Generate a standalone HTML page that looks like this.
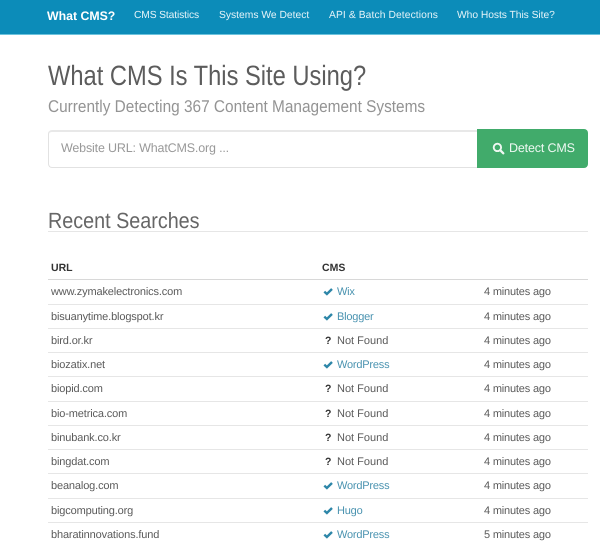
<!DOCTYPE html>
<html><head><meta charset="utf-8">
<style>
html,body{margin:0;padding:0;background:#fff}
body{width:600px;height:559px;position:relative;overflow:hidden;font-family:"Liberation Sans",sans-serif;color:#555;text-rendering:geometricPrecision}
.t{position:absolute;white-space:nowrap;line-height:1}
.nav{position:absolute;left:0;top:0;width:600px;height:34px;background:#0c8cb9;border-bottom:1px solid #6cc3dd}
.n{color:#e4f3f8;font-size:10.3px;top:11px}
.l{position:absolute;left:48px;width:540px;height:1px;background:#e6e6e6}
.u,.c,.m,.q{margin-top:1px}
.u{left:51px;font-size:11px;letter-spacing:-.14px;color:#5a5a5a}
.c{left:337px;font-size:11px;color:#5a5a5a}
.c.a{color:#4a93b0;letter-spacing:-.2px}
.m{left:484px;font-size:11px;letter-spacing:-.18px;color:#5a5a5a}
.th{font-size:10.5px;font-weight:bold;color:#333;top:263px}
svg{position:absolute}
.q{left:325px;font-size:10.5px;font-weight:bold;color:#333}
.x{transform-origin:0 0}
</style></head><body>
<div class="nav"></div>
<div class="t" style="left:47px;top:10px;font-size:12.3px;font-weight:bold;color:#fff">What CMS?</div>
<div class="t n" style="left:134px;letter-spacing:-.14px">CMS Statistics</div>
<div class="t n" style="left:219px">Systems We Detect</div>
<div class="t n" style="left:329px;letter-spacing:.09px">API &amp; Batch Detections</div>
<div class="t n" style="left:457px;letter-spacing:-.05px">Who Hosts This Site?</div>

<div class="t x" style="left:48px;top:62px;font-size:28px;color:#5c5c5c;transform:scaleX(.846)">What CMS Is This Site Using?</div>
<div class="t x" style="left:48px;top:98px;font-size:17px;color:#949494;transform:scaleX(.905)">Currently Detecting 367 Content Management Systems</div>

<div style="position:absolute;left:48px;top:130px;width:430px;height:38px;box-sizing:border-box;border:1px solid #e2e2e2;border-right:0;border-top:2px solid #e8e8e8;border-radius:4px 0 0 4px"></div>
<div class="t" style="left:61px;top:142px;font-size:12.5px;color:#999;letter-spacing:-.17px">Website URL: WhatCMS.org ...</div>
<div style="position:absolute;left:477px;top:129px;width:111px;height:39px;background:#41ab6b;border-radius:0 4px 4px 0"></div>
<svg style="left:492px;top:142px" width="13" height="13" viewBox="0 0 13 13"><circle cx="5.4" cy="5.4" r="3.7" fill="none" stroke="#eef8f2" stroke-width="1.9"/><path d="M8.2 8.2L11.3 11.3" stroke="#eef8f2" stroke-width="2.3" stroke-linecap="round"/></svg>
<div class="t" style="left:509px;top:142px;font-size:12.5px;color:#eef8f2;letter-spacing:-.16px">Detect CMS</div>

<div class="t x" style="left:48px;top:210px;font-size:22px;color:#666;transform:scaleX(.898)">Recent Searches</div>
<div class="l" style="top:231px"></div>

<div class="t th" style="left:51px">URL</div>
<div class="t th" style="left:322px">CMS</div>
<div class="l" style="top:279px;background:#d8d8d8"></div>
<div class="l" style="top:304px"></div>
<div class="l" style="top:328px"></div>
<div class="l" style="top:352px"></div>
<div class="l" style="top:376px"></div>
<div class="l" style="top:401px"></div>
<div class="l" style="top:425px"></div>
<div class="l" style="top:449px"></div>
<div class="l" style="top:473px"></div>
<div class="l" style="top:498px"></div>
<div class="l" style="top:522px"></div>

<svg width="0" height="0"><defs><path id="k" d="M1.3 4.6L3.9 7L9 2" fill="none" stroke="#2d86a8" stroke-width="2.4"/></defs></svg>

<div class="t u" style="top:286px">www.zymakelectronics.com</div>
<svg style="left:323px;top:287px" width="11" height="10"><use href="#k"/></svg>
<div class="t c a" style="top:286px">Wix</div>
<div class="t m" style="top:286px">4 minutes ago</div>

<div class="t u" style="top:311px">bisuanytime.blogspot.kr</div>
<svg style="left:323px;top:312px" width="11" height="10"><use href="#k"/></svg>
<div class="t c a" style="top:311px">Blogger</div>
<div class="t m" style="top:311px">4 minutes ago</div>

<div class="t u" style="top:335px">bird.or.kr</div>
<div class="t q" style="top:335px">?</div>
<div class="t c" style="top:335px">Not Found</div>
<div class="t m" style="top:335px">4 minutes ago</div>

<div class="t u" style="top:359px">biozatix.net</div>
<svg style="left:323px;top:360px" width="11" height="10"><use href="#k"/></svg>
<div class="t c a" style="top:359px">WordPress</div>
<div class="t m" style="top:359px">4 minutes ago</div>

<div class="t u" style="top:383px">biopid.com</div>
<div class="t q" style="top:383px">?</div>
<div class="t c" style="top:383px">Not Found</div>
<div class="t m" style="top:383px">4 minutes ago</div>

<div class="t u" style="top:408px">bio-metrica.com</div>
<div class="t q" style="top:408px">?</div>
<div class="t c" style="top:408px">Not Found</div>
<div class="t m" style="top:408px">4 minutes ago</div>

<div class="t u" style="top:432px">binubank.co.kr</div>
<div class="t q" style="top:432px">?</div>
<div class="t c" style="top:432px">Not Found</div>
<div class="t m" style="top:432px">4 minutes ago</div>

<div class="t u" style="top:456px">bingdat.com</div>
<div class="t q" style="top:456px">?</div>
<div class="t c" style="top:456px">Not Found</div>
<div class="t m" style="top:456px">4 minutes ago</div>

<div class="t u" style="top:480px">beanalog.com</div>
<svg style="left:323px;top:481px" width="11" height="10"><use href="#k"/></svg>
<div class="t c a" style="top:480px">WordPress</div>
<div class="t m" style="top:480px">4 minutes ago</div>

<div class="t u" style="top:505px">bigcomputing.org</div>
<svg style="left:323px;top:506px" width="11" height="10"><use href="#k"/></svg>
<div class="t c a" style="top:505px">Hugo</div>
<div class="t m" style="top:505px">4 minutes ago</div>

<div class="t u" style="top:529px">bharatinnovations.fund</div>
<svg style="left:323px;top:530px" width="11" height="10"><use href="#k"/></svg>
<div class="t c a" style="top:529px">WordPress</div>
<div class="t m" style="top:529px">5 minutes ago</div>
</body></html>
